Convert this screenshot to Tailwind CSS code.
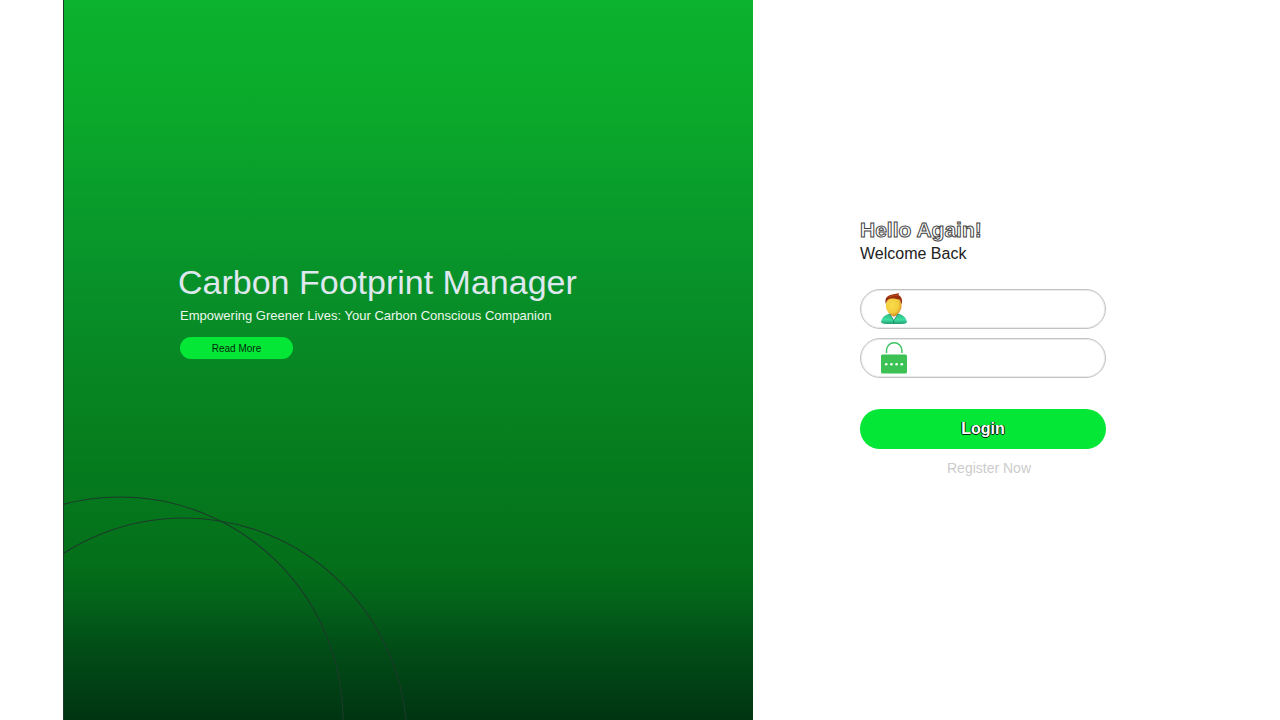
<!DOCTYPE html>
<html lang="en">
<head>
<meta charset="utf-8">
<meta name="viewport" content="width=device-width, initial-scale=1">
<title>Carbon Footprint Manager</title>
<script src="https://cdn.jsdelivr.net/npm/@tailwindcss/browser@4"></script>
</head>
<body class="bg-white font-['Liberation_Sans',Arial,sans-serif]">
<main class="grid min-h-screen grid-cols-[690fr_527fr] pl-[63px]">
  <section class="relative flex flex-col items-start justify-center overflow-hidden border-l border-[#1c3a28] bg-[linear-gradient(to_bottom,#0cb32e_0%,#0aa82b_16%,#08922a_38%,#067f1f_60%,#04701a_78%,#03641a_83%,#014a16_91%,#003512_100%)] pb-[99px] pl-[114px]">
    <svg class="absolute bottom-0 left-0" width="350" height="225" viewBox="64 495 350 225" fill="none" stroke="#1d3a2b" stroke-width="1.1" aria-hidden="true">
      <circle cx="120" cy="720" r="223"/>
      <circle cx="184" cy="741" r="223"/>
    </svg>
    <h1 class="relative text-[34px] leading-10 text-[#dfe8ee]">Carbon Footprint Manager</h1>
    <p class="relative mt-1 ml-[2px] text-[13px] leading-5 text-[#eef8ee]">Empowering Greener Lives: Your Carbon Conscious Companion</p>
    <button type="button" class="relative mt-[11px] ml-[2px] h-[22px] w-[113px] rounded-full bg-[#04e737] text-[10px] text-[#022b0b]">Read More</button>
  </section>
  <section class="flex flex-col justify-center pb-[27px] pl-[107px]">
    <form class="flex w-full max-w-[246px] flex-col">
      <h2 class="text-[21px] leading-7 font-bold text-white [-webkit-text-stroke:1px_#444]">Hello Again!</h2>
      <p class="text-base leading-5 text-[#222]">Welcome Back</p>
      <label class="mt-[25px] flex h-10 items-center gap-2 rounded-full border border-[#c4c1c3] pr-4 pl-5 inset-ring inset-ring-[#ebebeb]">
        <svg class="shrink-0" width="26" height="32" viewBox="0 0 26 32" aria-hidden="true">
          <defs>
            <radialGradient id="face" cx=".4" cy=".45" r=".65"><stop offset="0" stop-color="#f8dc4a"/><stop offset=".65" stop-color="#f3cc3c"/><stop offset="1" stop-color="#d58a22"/></radialGradient>
            <linearGradient id="shirt" x1="0" y1="0" x2="0" y2="1"><stop offset="0" stop-color="#2fb585"/><stop offset=".6" stop-color="#3fe0a0"/><stop offset="1" stop-color="#219a70"/></linearGradient>
          </defs>
          <path d="M0 29.500C.3 24.500 4.500 21.500 9 20.500h8c4.500 1 8.500 4 9 9Q24 31 20 31H6Q2 31 0 29.500Z" fill="url(#shirt)"/>
          <path d="M8.800 18h8v3.500l-3.800 4-4.200-4Z" fill="#d99422"/>
          <path d="M9.500 22 13 23.500l3.500-1.500L13 27.500Z" fill="#f0e9f4"/>
          <path d="M8.700 20.800 12.500 27.500 13 31M17 20.800l-4 6.700" fill="none" stroke="#17865d" stroke-width=".8"/>
          <ellipse cx="12.700" cy="12.800" rx="7.900" ry="9.200" fill="url(#face)"/>
          <path d="M4.800 11C3.800 7 4.800 4 8 2.500 11 1 14 1.500 18 0l-.6 2C21 4 21.800 7.500 20.500 11.500L18.900 6.800C15 5.600 12 4.900 9 5.800 6.500 6.500 5.500 8.500 4.800 11Z" fill="#99300f"/>
          <path d="M8 3.700C11 2.500 14 3 17 1.900" fill="none" stroke="#c14a1c" stroke-width="1"/>
        </svg>
        <input type="text" name="username" aria-label="Username" class="h-full w-full min-w-0 bg-transparent text-sm text-gray-700 outline-none">
      </label>
      <label class="mt-[9px] flex h-10 items-center gap-2 rounded-full border border-[#c4c1c3] pr-4 pl-5 inset-ring inset-ring-[#ebebeb]">
        <svg class="shrink-0" width="26" height="32" viewBox="0 0 26 32" aria-hidden="true">
          <path d="M5.500 11V8.500a7.700 7.700 0 0 1 15.400 0V11" fill="none" stroke="#3fc463" stroke-width="1.500"/>
          <rect x="0" y="12.500" width="26" height="19" rx="1.500" fill="#3bc154"/>
          <g fill="#fff"><circle cx="5.200" cy="22.300" r="1.300"/><circle cx="10.400" cy="22.300" r="1.300"/><circle cx="15.600" cy="22.300" r="1.300"/><circle cx="20.800" cy="22.300" r="1.300"/></g>
        </svg>
        <input type="password" name="password" aria-label="Password" class="h-full w-full min-w-0 bg-transparent text-sm text-gray-700 outline-none">
      </label>
      <button type="submit" class="mt-[31px] h-10 rounded-full bg-[#04e737] text-base font-bold text-white [text-shadow:-1px_0_#022b0b,0_1px_#022b0b,1px_0_#022b0b]">Login</button>
      <a href="#" class="mt-[9px] ml-3 self-center text-sm leading-5 text-[#cccccc]">Register Now</a>
    </form>
  </section>
</main>
</body>
</html>
